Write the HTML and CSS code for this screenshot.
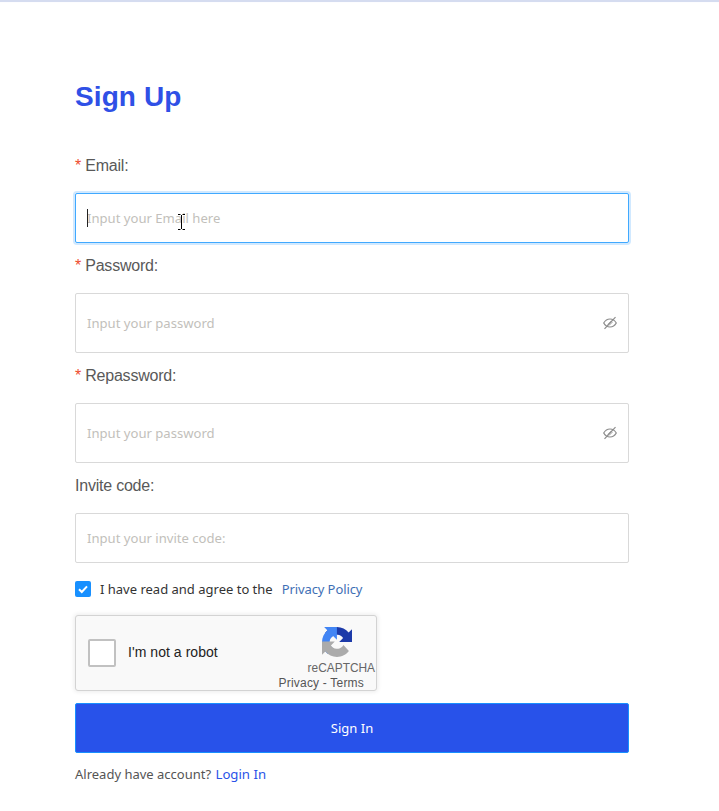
FILE: index.html
```html
<!DOCTYPE html>
<html lang="en">
<head>
<meta charset="utf-8">
<title>Sign Up</title>
<link rel="stylesheet" href="styles.css">
</head>
<body>
<div class="topline"></div>
<main class="page">
  <h1 class="title">Sign Up</h1>
  <form class="form">
    <label class="label"><span class="req">*</span>Email:</label>
    <div class="field field-short field-focus">
      <input class="input" type="text" placeholder="Input your Email here">
      <span class="caret"></span>
      <svg class="ibeam" width="9" height="16" viewBox="0 0 9 16"><path d="M1 .5h2.500M5.500 .5H8M4.500 1v14M1 15.500h2.500M5.500 15.500H8" fill="none" stroke="#000" stroke-width="1"/></svg>
    </div>
    <label class="label"><span class="req">*</span>Password:</label>
    <div class="field">
      <input class="input" type="password" placeholder="Input your password">
      <svg class="eye" width="14" height="14" viewBox="0 0 14 14"><path d="M.7 7C2.200 4.400 4.400 3 7 3S11.800 4.400 13.300 7C11.800 9.600 9.600 11 7 11S2.200 9.600.7 7Z" fill="none" stroke="#8c8c8c" stroke-width="1.200"/><path d="M4.700 8.500 8.500 4.700M6 9.500 9.500 6" fill="none" stroke="#a6a6a6" stroke-width="1"/><path d="M1.500 12.800 12.500 1.200" fill="none" stroke="#8c8c8c" stroke-width="1.200"/></svg>
    </div>
    <label class="label"><span class="req">*</span>Repassword:</label>
    <div class="field">
      <input class="input" type="password" placeholder="Input your password">
      <svg class="eye" width="14" height="14" viewBox="0 0 14 14"><path d="M.7 7C2.200 4.400 4.400 3 7 3S11.800 4.400 13.300 7C11.800 9.600 9.600 11 7 11S2.200 9.600.7 7Z" fill="none" stroke="#8c8c8c" stroke-width="1.200"/><path d="M4.700 8.500 8.500 4.700M6 9.500 9.500 6" fill="none" stroke="#a6a6a6" stroke-width="1"/><path d="M1.500 12.800 12.500 1.200" fill="none" stroke="#8c8c8c" stroke-width="1.200"/></svg>
    </div>
    <label class="label">Invite code:</label>
    <div class="field field-short">
      <input class="input" type="text" placeholder="Input your invite code:">
    </div>
    <div class="agree">
      <span class="check"><svg width="16" height="16" viewBox="0 0 16 16"><path d="M4 8.200 6.800 11 12 5.400" fill="none" stroke="#fff" stroke-width="2"/></svg></span>
      <span class="agree-text">I have read and agree to the</span>
      <a class="policy">Privacy Policy</a>
    </div>
    <div class="captcha">
      <span class="captcha-box"></span>
      <span class="captcha-text">I'm not a robot</span>
      <div class="captcha-brand">
        <svg class="captcha-logo" width="30" height="30" viewBox="0 0 64 64">
          <path d="M64 31.955l-.033-1.37V4.687l-7.160 7.160C50.948 4.674 42.033.093 32.050.093c-10.400 0-19.622 4.960-25.458 12.640l11.736 11.860a15.550 15.550 0 0 1 4.754-5.334c2.050-1.600 4.952-2.906 8.968-2.906.485 0 .860.057 1.135.163 4.976.393 9.288 3.140 11.828 7.124l-8.307 8.307 32.290.007" fill="#1c3aa9"/>
          <path d="M31.862.094l-1.370.033H4.594l7.160 7.160C4.580 13.147 0 22.060 0 32.046c0 10.400 4.960 19.622 12.640 25.458L24.500 45.768a15.550 15.550 0 0 1-5.334-4.754c-1.600-2.050-2.906-4.952-2.906-8.968 0-.485.057-.860.163-1.135.393-4.976 3.140-9.288 7.124-11.828l8.307 8.307.007-32.290" fill="#4285f4"/>
          <path d="M.001 32.045l.033 1.370v25.898l7.160-7.160c5.860 7.173 14.774 11.754 24.760 11.754 10.400 0 19.622-4.960 25.458-12.640L45.677 38.400a15.550 15.550 0 0 1-4.754 5.334c-2.050 1.600-4.952 2.906-8.968 2.906-.485 0-.860-.057-1.135-.163-4.976-.393-9.288-3.140-11.828-7.124l8.307-8.307-32.290-.007" fill="#ababab"/>
        </svg>
        <span class="captcha-name">reCAPTCHA</span>
        <span class="captcha-links">Privacy - Terms</span>
      </div>
    </div>
    <button class="submit" type="button">Sign In</button>
    <p class="foot">Already have account? <a class="login">Login In</a></p>
  </form>
</main>
</body>
</html>
```
FILE: styles.css
```css
* { box-sizing: border-box; }
html, body { margin: 0; padding: 0; background: #fff; overflow: hidden; }
body { height: 811px; font-family: "Noto Sans", sans-serif; }
.topline { height: 3px; background: #fdfdff; border-top: 2px solid #d5dcf0; }
.page { padding: 0 90px 0 75px; }
.title { margin: 0; padding-top: 76px; height: 140px; font: bold 28px/36px "Liberation Sans", sans-serif; color: #2f50e6; letter-spacing: 0.1px; }
.label { display: flex; align-items: center; height: 44px; padding-top: 2px; margin-bottom: 6px; font: 16px/24px "Liberation Sans", sans-serif; letter-spacing: -0.22px; color: #595959; }
.req { color: #ee4b2b; margin-right: 4px; font-size: 16px; letter-spacing: 0; }
.field { position: relative; height: 60px; }
.field-short { height: 50px; }
.input { display: block; width: 100%; height: 100%; padding: 0 40px 0 11px; border: 1px solid #d9d9d9; border-radius: 2px; outline: 0; background: #fff; font: 13.100px/20px "Noto Sans", sans-serif; color: #555; }
.input::placeholder { color: #c2bfbb; opacity: 1; }
.field-focus .input { border-color: #40a9ff; box-shadow: 0 0 0 2px rgba(24,144,255,.2); }
.caret { position: absolute; left: 12px; top: 16px; width: 1px; height: 18px; background: #222; }
.ibeam { position: absolute; left: 102px; top: 21px; }
.eye { position: absolute; right: 12px; top: 23px; }
.agree { display: flex; align-items: center; height: 52px; font-size: 13px; color: #444; }
.check { display: block; width: 16px; height: 16px; margin-right: 9px; border-radius: 2px; background: #1890ff; }
.check svg { display: block; }
.agree-text { margin-right: 9px; color: #333; }
.policy { color: #3f6fb5; letter-spacing: -0.1px; }
.captcha { display: flex; align-items: center; width: 302px; height: 76px; border: 1px solid #d3d3d3; border-radius: 3px; background: #f9f9f9; box-shadow: 0 0 4px 1px rgba(0,0,0,.08); position: relative; }
.captcha-box { width: 28px; height: 28px; margin-left: 12px; border: 2px solid #c1c1c1; border-radius: 2px; background: #fff; }
.captcha-text { margin: 0 0 2px 12px; font: 14px/18px "Liberation Sans", sans-serif; letter-spacing: 0.05px; color: #222; }
.captcha-logo { position: absolute; left: 246px; top: 11px; }
.captcha-brand { font-family: "Liberation Sans", sans-serif; color: #666; }
.captcha-name { position: absolute; right: 1px; top: 45px; font-size: 11.900px; line-height: 14px; }
.captcha-links { position: absolute; right: 12px; top: 60px; font-size: 12px; line-height: 14px; letter-spacing: 0.2px; color: #555; }
.submit { display: block; width: 100%; height: 50px; margin-top: 12px; border: 1px solid #1890ff; border-radius: 2px; background: #2852ea; color: #fff; font: 13px/20px "Noto Sans", sans-serif; }
.foot { margin: 11px 0 0; font-size: 13px; line-height: 20px; color: #555; }
.login { color: #2a52e8; font-size: 13.200px; margin-left: 1px; }
```
